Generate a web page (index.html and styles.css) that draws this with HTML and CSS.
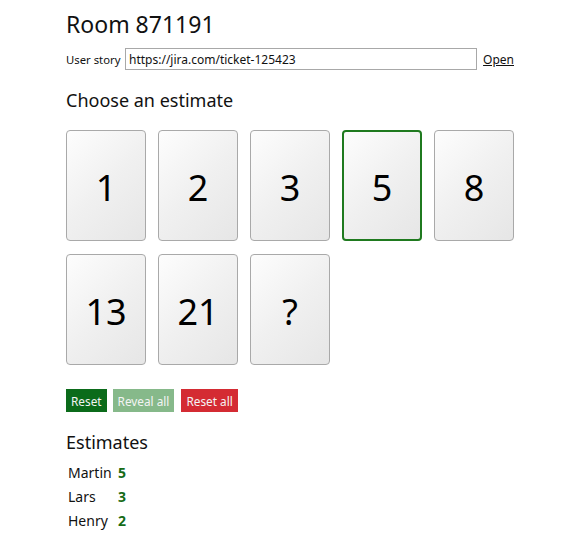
FILE: index.html
```html
<!DOCTYPE html>
<html>
<head>
<meta charset="utf-8">
<link rel="stylesheet" href="styles.css">
</head>
<body>
<main class="room">
  <h1 class="title">Room 871191</h1>
  <div class="story">
    <label class="story-label" for="story">User story</label>
    <input id="story" class="story-input" type="text" value="https://jira.com/ticket-125423">
    <a class="story-link" href="#">Open</a>
  </div>
  <h2 class="heading">Choose an estimate</h2>
  <div class="cards">
    <button class="card">1</button>
    <button class="card">2</button>
    <button class="card">3</button>
    <button class="card card-selected">5</button>
    <button class="card">8</button>
    <button class="card">13</button>
    <button class="card">21</button>
    <button class="card">?</button>
  </div>
  <div class="actions">
    <button class="btn btn-reset">Reset</button>
    <button class="btn btn-reveal">Reveal all</button>
    <button class="btn btn-reset-all">Reset all</button>
  </div>
  <h2 class="heading heading-estimates">Estimates</h2>
  <table class="estimates">
    <tr><td class="name">Martin</td><td class="value">5</td></tr>
    <tr><td class="name">Lars</td><td class="value">3</td></tr>
    <tr><td class="name">Henry</td><td class="value">2</td></tr>
  </table>
</main>
</body>
</html>
```

FILE: styles.css
```css
* { box-sizing: border-box; }
body {
  margin: 0;
  background: #fff;
  color: #111;
  font-family: "Noto Sans", "Open Sans", sans-serif;
}
.room {
  padding: 8px 0 0 66px;
  width: 514px;
}
.title {
  margin: 0;
  font-size: 23px;
  font-weight: 400;
  line-height: 32px;
}
.story {
  display: flex;
  align-items: center;
  margin-top: 8px;
  height: 22px;
}
.story-label {
  font-size: 11.3px;
  width: 59px;
  flex: none;
}
.story-input {
  width: 353px;
  height: 22px;
  border: 1px solid #a8a8a8;
  font: inherit;
  font-size: 12px;
  padding: 0 3px;
  color: #111;
}
.story-link {
  margin-left: 6px;
  font-size: 12px;
  color: #111;
  text-decoration: underline;
}
.heading {
  margin: 0;
  font-size: 18px;
  font-weight: 400;
  line-height: 24px;
}
.room > .heading:first-of-type { margin-top: 18px; }
.cards {
  display: grid;
  grid-template-columns: repeat(5, 80px);
  column-gap: 12px;
  row-gap: 13px;
  margin-top: 18px;
}
.card {
  width: 80px;
  height: 111px;
  border: 1px solid #a9a9a9;
  border-radius: 4px;
  background: linear-gradient(135deg, #fdfdfd 0%, #f0f0f0 50%, #e6e6e6 100%);
  font-family: inherit;
  font-size: 36px;
  color: #000;
  padding: 4px 0 0;
  cursor: pointer;
}
.card-selected {
  border: 2px solid #1f7a1f;
}
.actions {
  display: flex;
  gap: 6px;
  margin-top: 24px;
}
.btn {
  border: none;
  height: 23px;
  padding: 0 5px;
  font-family: inherit;
  font-size: 11.8px;
  color: #f4f4f4;
}
.btn-reset { background: #0b6b1a; }
.btn-reveal { background: #86b98a; }
.btn-reset-all { background: #d42b33; margin-left: 1px; }
.heading-estimates { margin-top: 18px; }
.estimates {
  border-collapse: collapse;
  margin-top: 6px;
  font-size: 14px;
}
.estimates td {
  padding: 0 2px;
  height: 24px;
}
.estimates .name { width: 50px; padding-right: 0; }
.estimates .value {
  color: #166b16;
  font-weight: 700;
}
```
